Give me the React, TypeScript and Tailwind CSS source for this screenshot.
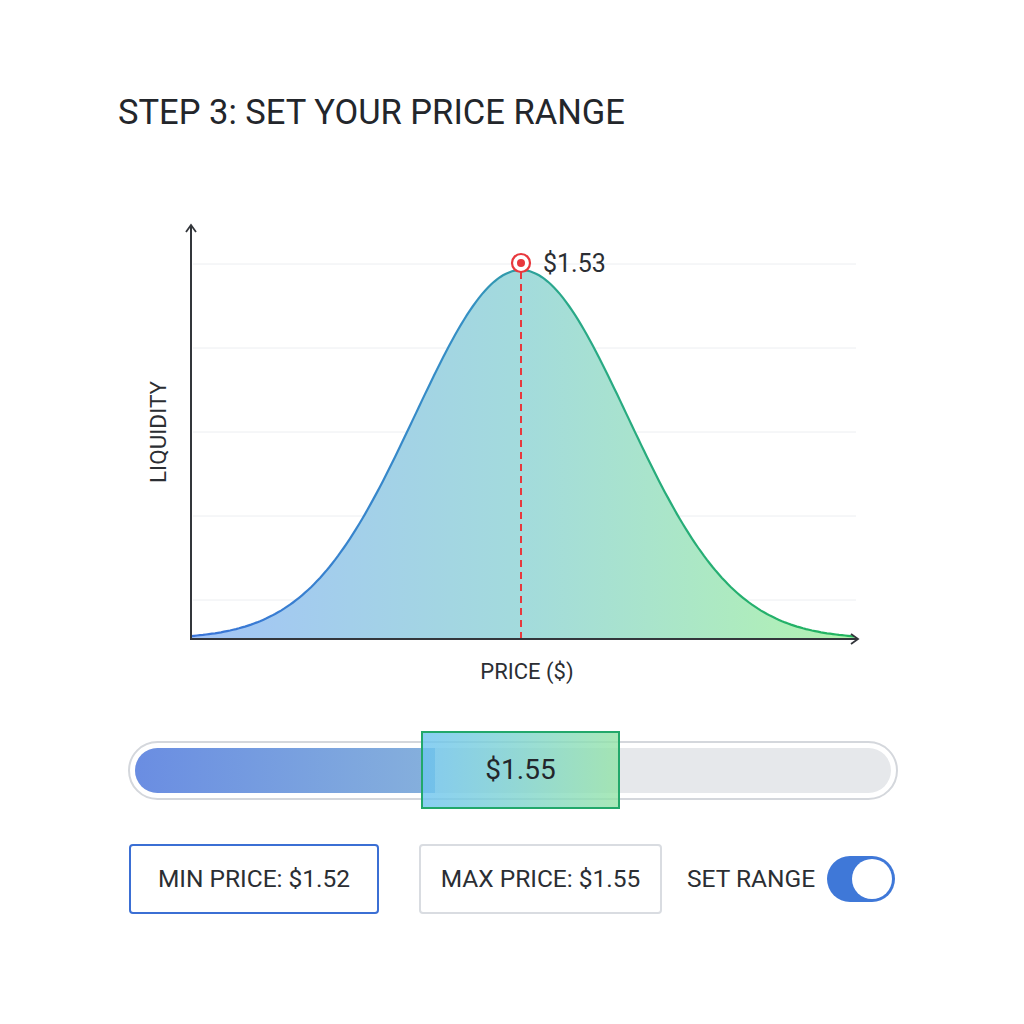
import React from 'react';

const font = { fontFamily: 'Roboto, "Noto Sans", Arial, sans-serif' };

// gaussian liquidity curve in page coordinates
const BASE = 639;
const PEAK_X = 521;
const PEAK_H = 369;
const SIGMA = 106;

function curvePoints() {
  const pts: [number, number][] = [];
  for (let x = 191; x <= 856; x += 3) {
    const d = x - PEAK_X;
    pts.push([x, BASE - PEAK_H * Math.exp(-(d * d) / (2 * SIGMA * SIGMA))]);
  }
  return pts;
}

function LiquidityChart() {
  const pts = curvePoints();
  const line = pts.map((p, i) => `${i ? 'L' : 'M'}${p[0].toFixed(1)} ${p[1].toFixed(1)}`).join(' ');
  const area = `${line} L856 ${BASE} L191 ${BASE} Z`;
  const grid = [264, 348, 432, 516, 600];

  return (
    <svg width={772} height={490} viewBox="128 200 772 490" className="block">
      <defs>
        <linearGradient id="fill" x1="191" x2="856" y1="0" y2="0" gradientUnits="userSpaceOnUse">
          <stop offset="0" stopColor="#a3c4f7" />
          <stop offset="0.5" stopColor="#a3dbdc" />
          <stop offset="1" stopColor="#b3f3b0" />
        </linearGradient>
        <linearGradient id="stroke" x1="191" x2="856" y1="0" y2="0" gradientUnits="userSpaceOnUse">
          <stop offset="0" stopColor="#3a74d8" />
          <stop offset="0.42" stopColor="#3590c4" />
          <stop offset="0.55" stopColor="#2aa88a" />
          <stop offset="1" stopColor="#22b45e" />
        </linearGradient>
      </defs>

      {grid.map((y) => (
        <line key={y} x1={193} x2={856} y1={y} y2={y} stroke="#eceef1" strokeWidth={1} />
      ))}

      <path d={area} fill="url(#fill)" />
      <path d={line} fill="none" stroke="url(#stroke)" strokeWidth={2.2} />

      <line x1={521} x2={521} y1={272} y2={639} stroke="#e8383d" strokeWidth={2} strokeDasharray="7 5" />

      {/* axes */}
      <line x1={191} x2={191} y1={226} y2={640} stroke="#33363b" strokeWidth={2} />
      <line x1={190} x2={857} y1={639} y2={639} stroke="#33363b" strokeWidth={2} />
      <path d="M186 232 L191 225 L196 232" fill="none" stroke="#33363b" strokeWidth={1.8} />
      <path d="M851 634 L858 639 L851 644" fill="none" stroke="#33363b" strokeWidth={1.8} />

      {/* current price marker */}
      <circle cx={521} cy={263} r={9} fill="#fff" stroke="#e8383d" strokeWidth={2.2} />
      <circle cx={521} cy={263} r={4} fill="#e8383d" />
      <text x={543} y={272} fontSize={25} fill="#2b2e33" style={font}>$1.53</text>

      <text
        x={166}
        y={432}
        fontSize={22.5}
        fill="#2b2e33"
        textAnchor="middle"
        transform="rotate(-90 166 432)"
        style={font}
      >
        LIQUIDITY
      </text>
      <text x={527} y={679} fontSize={22} fill="#2b2e33" textAnchor="middle" style={font}>
        PRICE ($)
      </text>
    </svg>
  );
}

function RangeSlider() {
  return (
    <div className="relative ml-[10px] flex h-[78px] w-[770px] items-center">
      <div className="h-[59px] w-full rounded-full border-2 border-[#d4d7dc] bg-white p-[5px]">
        <div className="h-full w-full overflow-hidden rounded-full bg-[#e6e8eb]">
          <div className="h-full w-[300px] bg-gradient-to-r from-[#6a8de2] to-[#86b0dc]" />
        </div>
      </div>
      <div className="absolute left-[293px] top-0 flex h-[78px] w-[199px] items-center justify-center border-2 border-[#22a86b] bg-gradient-to-r from-[#6cc3f0]/80 to-[#93e3a6]/80">
        <span className="text-[28px] text-[#23262b]" style={font}>$1.55</span>
      </div>
    </div>
  );
}

export default function App() {
  return (
    <div className="min-h-[1024px] w-[1024px] bg-white pl-[118px] pt-[91px]" style={font}>
      <h1 className="text-[34.5px] leading-[42px] font-normal text-[#23262b]">STEP 3: SET YOUR PRICE RANGE</h1>

      <div className="ml-[10px] mt-[67px]">
        <LiquidityChart />
      </div>

      <div className="mt-[41px]">
        <RangeSlider />
      </div>

      <div className="ml-[11px] mt-[35px] flex items-center">
        <div className="flex h-[70px] w-[250px] items-center justify-center rounded-[4px] border-2 border-[#3b6fd4] text-[24.5px] text-[#2b2e33]">
          MIN PRICE: $1.52
        </div>
        <div className="ml-[40px] flex h-[70px] w-[243px] items-center justify-center rounded-[4px] border-2 border-[#d9dce1] text-[24.5px] text-[#2b2e33]">
          MAX PRICE: $1.55
        </div>
        <span className="ml-[25px] text-[24.5px] text-[#2b2e33]">SET RANGE</span>
        <div className="ml-[12px] flex h-[46px] w-[68px] items-center justify-end rounded-full bg-[#3f78d8] p-[3px]">
          <div className="h-[40px] w-[40px] rounded-full bg-white" />
        </div>
      </div>
    </div>
  );
}
